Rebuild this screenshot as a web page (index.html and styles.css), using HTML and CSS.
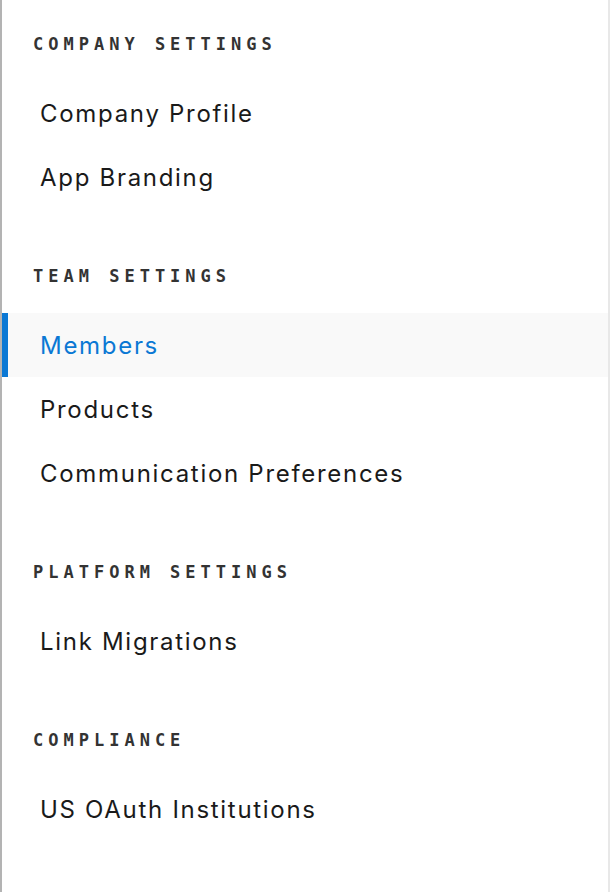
FILE: index.html
```html
<!DOCTYPE html>
<html>
<head>
<meta charset="utf-8">
<link rel="stylesheet" href="styles.css">
</head>
<body>
<nav class="sidebar">
  <section class="group">
    <h2 class="group-title">Company Settings</h2>
    <a class="item">Company Profile</a>
    <a class="item">App Branding</a>
  </section>
  <section class="group">
    <h2 class="group-title">Team Settings</h2>
    <a class="item active">Members</a>
    <a class="item">Products</a>
    <a class="item">Communication Preferences</a>
  </section>
  <section class="group">
    <h2 class="group-title">Platform Settings</h2>
    <a class="item">Link Migrations</a>
  </section>
  <section class="group">
    <h2 class="group-title">Compliance</h2>
    <a class="item">US OAuth Institutions</a>
  </section>
</nav>
</body>
</html>
```

FILE: styles.css
```css
html, body {
  margin: 0;
  padding: 0;
  background: #ffffff;
}

.sidebar {
  width: 606px;
  height: 892px;
  box-sizing: content-box;
  border-left: 2px solid #b3b3b3;
  border-right: 2px solid #e8e8e8;
  display: flex;
  flex-direction: column;
}

.group {
  display: flex;
  flex-direction: column;
  padding: 34px 0 23px;
}

.group-title {
  margin: 0 0 27px;
  padding-left: 31px;
  height: 20px;
  line-height: 20px;
  font-family: "DejaVu Sans Mono", "Liberation Mono", monospace;
  font-weight: bold;
  font-size: 17px;
  letter-spacing: 5px;
  text-transform: uppercase;
  color: #333333;
}

.item {
  display: flex;
  align-items: center;
  height: 64px;
  padding-left: 38px;
  font-family: Inter, "Liberation Sans", Arial, sans-serif;
  font-size: 24px;
  letter-spacing: 1.7px;
  color: #1a1a1a;
  text-decoration: none;
}

.item.active {
  background: #f9f9f9;
  color: #0b78d4;
  box-shadow: inset 6px 0 0 #0b78d4;
}
```
